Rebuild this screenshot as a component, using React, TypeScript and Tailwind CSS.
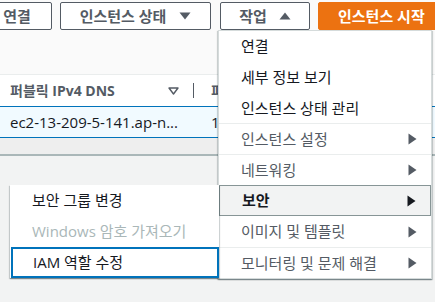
import React from "react";

const Down = () => (
  <svg width="12" height="8" viewBox="0 0 12 8"><path d="M0.5 0.5 L11.5 0.5 L6 7.5 Z" fill="#545b64" /></svg>
);
const Up = () => (
  <svg width="12" height="8" viewBox="0 0 12 8"><path d="M0.5 7.5 L11.5 7.5 L6 0.5 Z" fill="#545b64" /></svg>
);
const Right = ({ c = "#545b64" }: { c?: string }) => (
  <svg width="9" height="12" viewBox="0 0 9 12"><path d="M0.5 0.5 L8.5 6 L0.5 11.5 Z" fill={c} /></svg>
);

const MenuItem = ({
  label,
  arrow,
  sep,
  h = 31,
}: {
  label: string;
  arrow?: boolean;
  sep?: boolean;
  h?: number;
}) => (
  <div
    className={`flex items-center justify-between pl-[22px] pr-[14px] text-[15px] ${
      sep ? "border-t border-[#eaeded]" : ""
    } ${arrow ? "text-[#545b64]" : "text-[#16191f]"}`}
    style={{ height: h }}
  >
    <span>{label}</span>
    {arrow && <Right />}
  </div>
);

export default function App() {
  return (
    <div className="relative w-[435px] h-[302px] overflow-hidden bg-[#f2f3f3] font-['Open_Sans','Noto_Sans_CJK_KR',sans-serif]">
      {/* top toolbar area */}
      <div className="h-[75px] bg-[#fafafa] border-b border-[#eaeded] pt-[2px]">
        <div className="flex h-[28px] text-[15px] font-bold">
          <div className="ml-[-18px] w-[70px] shrink-0 flex items-center justify-center border border-[#545b64] rounded-[2px] bg-white text-[#545b64]">
            연결
          </div>
          <div className="ml-[8px] w-[151px] shrink-0 flex items-center justify-center gap-[13px] border border-[#545b64] rounded-[2px] bg-white text-[#545b64]">
            <span>인스턴스 상태</span>
            <Down />
          </div>
          <div className="ml-[9px] w-[90px] shrink-0 flex items-center justify-center gap-[12px] border border-[#545b64] rounded-[2px] bg-white text-[#545b64]">
            <span>작업</span>
            <Up />
          </div>
          <div className="ml-[8px] w-[140px] shrink-0 flex items-center pl-[19px] border border-[#ec7211] rounded-[2px] bg-[#ec7211] text-white">
            인스턴스 시작
          </div>
        </div>
      </div>

      {/* table header */}
      <div className="h-[31px] bg-white flex items-center text-[14px] font-bold text-[#545b64]">
        <span className="ml-[10px] w-[158px] shrink-0 whitespace-nowrap">퍼블릭 IPv4 DNS</span>
        <svg width="11" height="8" viewBox="0 0 11 8" className="shrink-0">
          <path d="M1 1 L10 1 L5.5 7 Z" fill="none" stroke="#545b64" strokeWidth="1.4" strokeLinejoin="round" />
        </svg>
        <div className="ml-[14px] w-px h-[15px] bg-[#545b64] shrink-0" />
        <span className="ml-[17px] whitespace-nowrap">퍼블릭</span>
      </div>

      {/* selected row */}
      <div className="h-[32px] bg-[#f1faff] border-y border-[#0073bb] flex items-center text-[15px] text-[#16191f]">
        <span className="ml-[10px] w-[201px] shrink-0 whitespace-nowrap">ec2-13-209-5-141.ap-n...</span>
        <span>13</span>
      </div>

      {/* scrollbar strip */}
      <div className="h-[18px] bg-[#eeeeee] border-b-2 border-[#aab7b8]" />

      {/* main dropdown menu */}
      <div className="absolute left-[218px] top-[30px] w-[214px] bg-white border border-[#d5dbdb] shadow-[0_1px_1px_0_rgba(0,28,36,0.3),1px_1px_1px_0_rgba(0,28,36,0.15),-1px_1px_1px_0_rgba(0,28,36,0.15)]">
        <MenuItem label="연결" h={31} />
        <MenuItem label="세부 정보 보기" h={31} />
        <MenuItem label="인스턴스 상태 관리" h={30} />
        <MenuItem label="인스턴스 설정" arrow sep />
        <MenuItem label="네트워킹" arrow sep />
        <div className="h-[31px] flex items-center justify-between pl-[22px] pr-[14px] text-[15px] font-bold text-[#16191f] bg-[#f2f3f3] border border-[#879596]">
          <span>보안</span>
          <Right c="#16191f" />
        </div>
        <MenuItem label="이미지 및 템플릿" arrow />
        <MenuItem label="모니터링 및 문제 해결" arrow sep />
      </div>

      {/* submenu */}
      <div className="absolute left-[10px] top-[185px] w-[209px] bg-white shadow-[0_1px_1px_0_rgba(0,28,36,0.3),1px_1px_1px_0_rgba(0,28,36,0.15),-1px_1px_1px_0_rgba(0,28,36,0.15)] text-[15px]">
        <div className="h-[31px] flex items-center pl-[22px] text-[#16191f]">보안 그룹 변경</div>
        <div className="h-[31px] flex items-center pl-[22px] text-[#aab7b8]">Windows 암호 가져오기</div>
        <div className="h-[31px] flex items-center pl-[20px] text-[#16191f] border-2 border-[#0073bb] ml-px">IAM 역할 수정</div>
      </div>
    </div>
  );
}
